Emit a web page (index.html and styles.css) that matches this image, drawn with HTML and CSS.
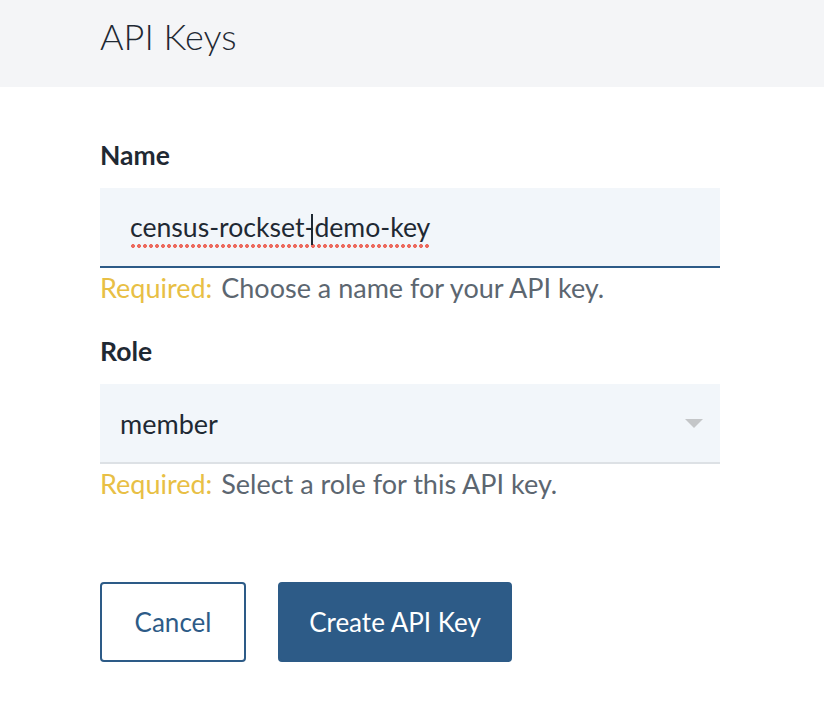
FILE: index.html
```html
<!DOCTYPE html>
<html lang="en">
<head>
<meta charset="utf-8">
<title>API Keys</title>
<link rel="stylesheet" href="styles.css">
</head>
<body>
<header class="page-header">
  <h1 class="page-title">API Keys</h1>
</header>
<main class="form">
  <div class="field">
    <label class="field-label">Name</label>
    <div class="input input-active">
      <span class="misspelled">census-rockset-<span class="caret"></span>demo-key</span>
    </div>
    <p class="hint"><span class="hint-req">Required:</span> Choose a name for your API key.</p>
  </div>
  <div class="field">
    <label class="field-label">Role</label>
    <div class="input select">
      <span class="select-value">member</span>
      <svg class="select-arrow" width="18" height="10" viewBox="0 0 18 10"><path d="M0 0 H18 L9 9 Z" fill="#c4c6c8"/></svg>
    </div>
    <p class="hint"><span class="hint-req">Required:</span> Select a role for this API key.</p>
  </div>
  <div class="actions">
    <button class="btn btn-outline">Cancel</button>
    <button class="btn btn-primary">Create API Key</button>
  </div>
</main>
</body>
</html>
```
FILE: styles.css
```css
* { box-sizing: border-box; }
html, body { margin: 0; padding: 0; background: #ffffff; }
body {
  font-family: "Lato", "Open Sans", sans-serif;
  color: #1f2933;
  width: 824px;
  height: 718px;
  overflow: hidden;
}
.page-header {
  background: #f4f5f7;
  height: 87px;
  padding-left: 100px;
  display: flex;
  align-items: center;
}
.page-title {
  margin: 0;
  margin-top: -16px;
  font-size: 36px;
  font-weight: 300;
  color: #1f2933;
}
.form {
  padding: 53px 104px 0 100px;
  display: flex;
  flex-direction: column;
}
.field { display: flex; flex-direction: column; }
.field + .field { margin-top: 33px; }
.field-label {
  font-size: 26.5px;
  font-weight: 700;
  color: #1f2933;
  line-height: 30px;
  margin-bottom: 18px;
}
.input {
  height: 80px;
  background: #f2f6fa;
  display: flex;
  align-items: center;
  font-size: 26.6px;
  color: #1f2933;
}
.input-active {
  border-bottom: 2px solid #2d5b87;
  padding-left: 30px;
  padding-top: 4px;
}
.misspelled {
  display: inline-block;
  line-height: 32px;
  padding-bottom: 5px;
  background-image: radial-gradient(circle at 3px 2px, #ec6a5e 1.7px, transparent 2.2px);
  background-size: 6px 4px;
  background-repeat: repeat-x;
  background-position: 0 100%;
}
.caret {
  display: inline-block;
  position: relative;
  width: 0;
  height: 1px;
}
.caret::after {
  content: "";
  position: absolute;
  left: -3px;
  bottom: -8px;
  width: 2px;
  height: 31px;
  background: #1f2933;
}
.select {
  border-bottom: 2px solid #dde1e5;
  padding-left: 20px;
  padding-right: 17px;
  justify-content: space-between;
}
.select-value { font-size: 27px; }
.select-arrow { display: block; margin-top: 2px; }
.hint {
  margin: 5px 0 0;
  font-size: 27px;
  line-height: 30px;
  color: #5c6670;
}
.hint-req { color: #e8bf45; margin-right: 2px; }
.actions {
  margin-top: 83px;
  display: flex;
  gap: 32px;
}
.btn {
  height: 80px;
  border-radius: 4px;
  font-family: inherit;
  font-size: 26px;
  padding: 0;
  cursor: pointer;
}
.btn-outline {
  background: #ffffff;
  border: 2px solid #2d5b87;
  color: #2d5b87;
  width: 146px;
}
.btn-primary {
  background: #2d5b87;
  border: 2px solid #2d5b87;
  color: #ffffff;
  width: 234px;
}
```
